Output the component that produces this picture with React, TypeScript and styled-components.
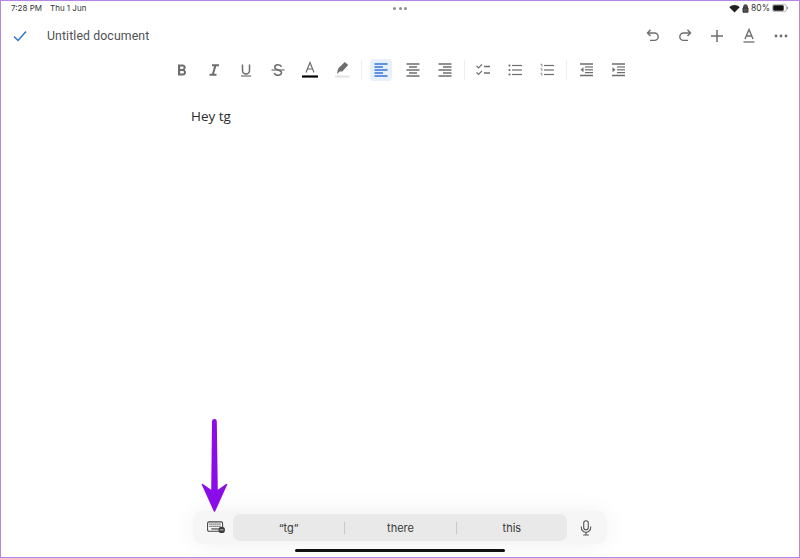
import React from "react";
import styled, { createGlobalStyle } from "styled-components";

const Global = createGlobalStyle`
  html, body { margin: 0; padding: 0; background: #fff; }
  body { width: 800px; height: 558px; overflow: hidden; font-family: "Inter", "Liberation Sans", sans-serif; }
  * { box-sizing: border-box; }
`;

const Frame = styled.div`
  position: relative;
  width: 800px;
  height: 558px;
  border: 1px solid #b587e2;
  background: #fff;
  display: flex;
  flex-direction: column;
  overflow: hidden;
`;

const StatusBar = styled.div`
  height: 14px;
  padding: 0 10px;
  display: grid;
  grid-template-columns: 1fr auto 1fr;
  align-items: center;
  font-size: 8px;
  color: #333;
`;

const StatusLeft = styled.div`
  display: flex;
  gap: 8px;
`;

const StatusRight = styled.div`
  display: flex;
  justify-content: flex-end;
  align-items: center;
  gap: 2px;
  font-size: 8.5px;
`;

const Dots = styled.div`
  display: flex;
  gap: 2.5px;
`;

const Dot = styled.span`
  width: 3px;
  height: 3px;
  border-radius: 50%;
  background: #8d8d8d;
`;

const TopBar = styled.div`
  height: 42px;
  padding: 0 2px 0 11px;
  display: flex;
  align-items: center;
`;

const Title = styled.div`
  margin-left: 19px;
  flex: 1;
  font-family: "Roboto", "Liberation Sans", sans-serif;
  font-size: 12.3px;
  letter-spacing: 0.1px;
  color: #4f5155;
`;

const IconRow = styled.div`
  display: flex;
  align-items: center;
`;

const IconCell = styled.div<{ $active?: boolean }>`
  width: 32px;
  height: 22px;
  display: flex;
  align-items: center;
  justify-content: center;
  position: relative;
  &::before {
    content: "";
    display: ${(p) => (p.$active ? "block" : "none")};
    position: absolute;
    left: 5px;
    top: 0;
    width: 22px;
    height: 22px;
    border-radius: 4px;
    background: #e8f0fe;
  }
  svg { position: relative; }
`;

const FormatBar = styled(IconRow)`
  height: 26px;
  padding-left: 165px;
`;

const Separator = styled.div<{ $tight?: boolean }>`
  width: 1px;
  height: 20px;
  margin: 0 ${(p) => (p.$tight ? "2px" : "3px")} 0 3px;
  background: #eeeeee;
`;

const Page = styled.div`
  flex: 1;
  padding: 24px 0 0 190px;
  font-family: "Open Sans", "Liberation Sans", sans-serif;
  font-size: 13.5px;
  line-height: 18px;
  color: #2b2b2b;
`;

const KeyboardRow = styled.div`
  display: flex;
  justify-content: center;
`;

const Assistant = styled.div`
  width: 414px;
  height: 33px;
  padding: 3px 40px;
  border-radius: 9px;
  background: #f6f6f6;
  box-shadow: 0 0 24px rgba(0, 0, 0, 0.06);
  position: relative;
  display: flex;
`;

const CornerIcon = styled.div<{ $side: "left" | "right" }>`
  position: absolute;
  top: 0;
  ${(p) => p.$side}: 0;
  width: 40px;
  height: 33px;
  padding-left: ${(p) => (p.$side === "left" ? "6px" : "0")};
  padding-right: ${(p) => (p.$side === "right" ? "2px" : "0")};
  display: flex;
  align-items: center;
  justify-content: center;
`;

const Suggestions = styled.div`
  flex: 1;
  display: grid;
  grid-template-columns: repeat(3, 1fr);
  align-items: center;
  border-radius: 7px;
  background: #e9e9e9;
`;

const Suggestion = styled.div<{ $divider?: boolean }>`
  text-align: center;
  font-size: 11px;
  line-height: 12px;
  color: #3a3a3a;
  border-left: ${(p) => (p.$divider ? "1px solid #c8c8c8" : "none")};
`;

const HomeBar = styled.div`
  width: 210px;
  height: 3px;
  margin: 5px auto 5px;
  border-radius: 2px;
  background: #111;
`;

const ArrowOverlay = styled.svg`
  position: absolute;
  left: 199px;
  top: 417px;
`;

const G = "#6d6d6d";

const Ic: React.FC<{ children: React.ReactNode; w?: number; h?: number }> = ({ children, w = 16, h = 16 }) => (
  <svg width={w} height={h} viewBox={`0 0 ${w} ${h}`} fill="none">{children}</svg>
);

const lines = (rows: [number, number, number][], c = G, sw = 1.5) =>
  rows.map(([y, a, b], i) => <path key={i} d={`M${a} ${y}H${b}`} stroke={c} strokeWidth={sw} />);

const bars = [
  <Ic key="b"><path d="M4 2.5h4.8a3 3 0 0 1 1.8 5.3A3.1 3.1 0 0 1 9.2 13.5H4zM6.2 4.6v2.3h2.3a1.15 1.15 0 0 0 0-2.3zM6.2 9v2.4h2.6a1.2 1.2 0 0 0 0-2.4z" fill={G} fillRule="evenodd" /></Ic>,
  <Ic key="i"><path d="M6 3.2h7M3.5 12.8h7M9.6 3L6.6 13" stroke={G} strokeWidth="2" /></Ic>,
  <Ic key="u"><path d="M4.5 2.5v6a3.5 3.5 0 0 0 7 0v-6" stroke={G} strokeWidth="1.5" /><path d="M3 14h10" stroke={G} strokeWidth="1.2" /></Ic>,
  <Ic key="s"><path d="M11.5 4.8C11 3.4 9.6 2.8 8 2.8c-1.9 0-3.3 1-3.3 2.5 0 3.4 6.8 1.9 6.8 5.3 0 1.6-1.5 2.6-3.5 2.6-1.8 0-3.2-.8-3.7-2.3" stroke={G} strokeWidth="1.5" /><path d="M1.5 8h13" stroke={G} strokeWidth="1.2" /></Ic>,
  <Ic key="a" h={18}><path d="M4 11.5L8 1.5l4 10M5.4 8h5.2" stroke={G} strokeWidth="1.2" /><path d="M0 15.5h16" stroke="#000" strokeWidth="2.2" /></Ic>,
  <Ic key="p" h={18}><path d="M10.8 1l3.4 3-6 6.6H5.6L3 13l.6-3.4L4.6 7z" fill={G} /><path d="M1 15.5h14.5" stroke="#e2e2e2" strokeWidth="2" /></Ic>,
];

const AlignIcon: React.FC<{ c?: string; mode: "l" | "c" | "r" }> = ({ c = G, mode }) => {
  const shortRow = (y: number): [number, number, number] =>
    mode === "l" ? [y, 1.5, 10] : mode === "c" ? [y, 4, 12] : [y, 6, 14.5];
  return (
    <Ic>
      {lines([[2, 1.5, 14.5], shortRow(5), [8, 1.5, 14.5], shortRow(11), [14, 1.5, 14.5]], c)}
    </Ic>
  );
};

const Check = () => (
  <Ic>
    <path d="M1.5 3.8L3.5 5.8L7 2.3M1.5 10.3L3.5 12.3L7 8.8" stroke={G} strokeWidth="1.2" />
    {lines([[4.5, 9, 15], [11, 9, 15]])}
  </Ic>
);

const Bullets = () => (
  <Ic>
    {[3.5, 8, 12.5].map((y) => <circle key={y} cx="2.5" cy={y} r="1.1" fill={G} />)}
    {lines([[3.5, 5, 15], [8, 5, 15], [12.5, 5, 15]], G, 1.2)}
  </Ic>
);

const Numbers = () => (
  <Ic>
    {[3.5, 8, 12.5].map((y) => <path key={y} d={`M1.5 ${y - 1.2}h1.4v2.4`} stroke={G} strokeWidth="0.8" />)}
    {lines([[3.5, 5, 15], [8, 5, 15], [12.5, 5, 15]], G, 1.2)}
  </Ic>
);

const Indent: React.FC<{ dir: "in" | "out" }> = ({ dir }) => (
  <Ic>
    {lines([[2, 2, 15], [13.5, 2, 15]], G, 1.5)}
    {lines([[5, 7, 15], [7.8, 7, 15], [10.6, 7, 15]], G, 1.2)}
    <path d={dir === "out" ? "M5.5 5.3v5L2.5 7.8z" : "M2.5 5.3v5l3-2.5z"} fill={G} />
  </Ic>
);

const App: React.FC = () => (
  <Frame>
    <Global />
    <StatusBar>
      <StatusLeft>
        <span>7:28 PM</span>
        <span>Thu 1 Jun</span>
      </StatusLeft>
      <Dots><Dot /><Dot /><Dot /></Dots>
      <StatusRight>
        <svg width="11" height="9" viewBox="0 0 11 9">
          <path d="M5.5 8.5L0.3 3.2C3.2 0.4 7.8 0.4 10.7 3.2z" fill="#222" />
        </svg>
        <svg width="7" height="9" viewBox="0 0 7 9">
          <path d="M1.6 4V2.7a1.9 1.9 0 0 1 3.8 0V4M1 4h5v4.2H1z" stroke="#333" strokeWidth="1" fill="#555" />
        </svg>
        <span>80%</span>
        <svg width="17" height="8" viewBox="0 0 17 8">
          <rect x="0.4" y="0.4" width="14" height="7.2" rx="2" fill="#fff" stroke="#999" strokeWidth="0.7" />
          <rect x="1.2" y="1.2" width="10.5" height="5.6" rx="1.2" fill="#111" />
          <path d="M15.4 2.8v2.4" stroke="#888" />
        </svg>
      </StatusRight>
    </StatusBar>
    <TopBar>
      <svg width="16" height="16" viewBox="0 0 16 16" fill="none">
        <path d="M2 8.5L6 12.5L14 3.5" stroke="#2f74c7" strokeWidth="1.5" />
      </svg>
      <Title>Untitled document</Title>
      <IconRow>
        <IconCell><Ic>
          <path d="M5.5 1.8L2.5 5L5.5 8M3 5h6.5a3.7 3.7 0 0 1 0 7.4H5" stroke={G} strokeWidth="1.4" />
        </Ic></IconCell>
        <IconCell><Ic>
          <path d="M10.5 1.8L13.5 5L10.5 8M13 5H6.5a3.7 3.7 0 0 0 0 7.4H11" stroke={G} strokeWidth="1.4" />
        </Ic></IconCell>
        <IconCell><Ic><path d="M8 2v12M2 8h12" stroke={G} strokeWidth="1.5" /></Ic></IconCell>
        <IconCell><Ic>
          <path d="M4 11L8 1.5l4 9.5M5.4 8h5.2" stroke={G} strokeWidth="1.4" />
          <path d="M2.5 14h11" stroke={G} strokeWidth="1.3" />
        </Ic></IconCell>
        <IconCell><Ic>
          <circle cx="3" cy="8" r="1.4" fill={G} /><circle cx="8" cy="8" r="1.4" fill={G} /><circle cx="13" cy="8" r="1.4" fill={G} />
        </Ic></IconCell>
      </IconRow>
    </TopBar>
    <FormatBar>
      {bars.map((b) => <IconCell key={b.key as string}>{b}</IconCell>)}
      <Separator />
      <IconCell $active><AlignIcon mode="l" c="#2f74d6" /></IconCell>
      <IconCell><AlignIcon mode="c" /></IconCell>
      <IconCell><AlignIcon mode="r" /></IconCell>
      <Separator $tight />
      <IconCell><Check /></IconCell>
      <IconCell><Bullets /></IconCell>
      <IconCell><Numbers /></IconCell>
      <Separator />
      <IconCell><Indent dir="out" /></IconCell>
      <IconCell><Indent dir="in" /></IconCell>
    </FormatBar>
    <Page>Hey tg</Page>
    <KeyboardRow>
      <Assistant>
        <CornerIcon $side="left">
          <svg width="19" height="13" viewBox="0 0 20 13" fill="none">
            <rect x="0.6" y="0.6" width="15.8" height="9.8" rx="1.4" stroke="#444" strokeWidth="1.1" />
            <path d="M2.5 3h12M2.5 5.3h12" stroke="#444" strokeWidth="1.2" strokeDasharray="1.2 0.9" />
            <path d="M4.5 8h8" stroke="#444" strokeWidth="1.2" />
            <circle cx="15.5" cy="9" r="3.4" fill="#3c3c3c" />
            <path d="M13.6 9h3.8" stroke="#f8f8f8" strokeWidth="0.8" />
          </svg>
        </CornerIcon>
        <Suggestions>
          <Suggestion>“tg”</Suggestion>
          <Suggestion $divider>there</Suggestion>
          <Suggestion $divider>this</Suggestion>
        </Suggestions>
        <CornerIcon $side="right">
          <svg width="12" height="16" viewBox="0 0 12 16" fill="none">
            <rect x="3.7" y="0.7" width="4.6" height="9" rx="2.3" stroke="#555" strokeWidth="1.1" />
            <path d="M1.3 6.5v1a4.7 4.7 0 0 0 9.4 0v-1M6 12.2v2.6M3.2 15h5.6" stroke="#555" strokeWidth="1.1" />
          </svg>
        </CornerIcon>
      </Assistant>
    </KeyboardRow>
    <HomeBar />
    <ArrowOverlay width="30" height="96" viewBox="0 0 30 96">
      <path d="M12 3.5a2.4 2.4 0 0 1 4.8 0L17.8 73L14.5 76L11.2 73z" fill="#8a0ce8" />
      <path d="M2.5 66.5L11 72.5H18L26.5 66.5L14.5 93z" fill="#8a0ce8" stroke="#8a0ce8" strokeWidth="1.5" strokeLinejoin="round" />
    </ArrowOverlay>
  </Frame>
);

export default App;
